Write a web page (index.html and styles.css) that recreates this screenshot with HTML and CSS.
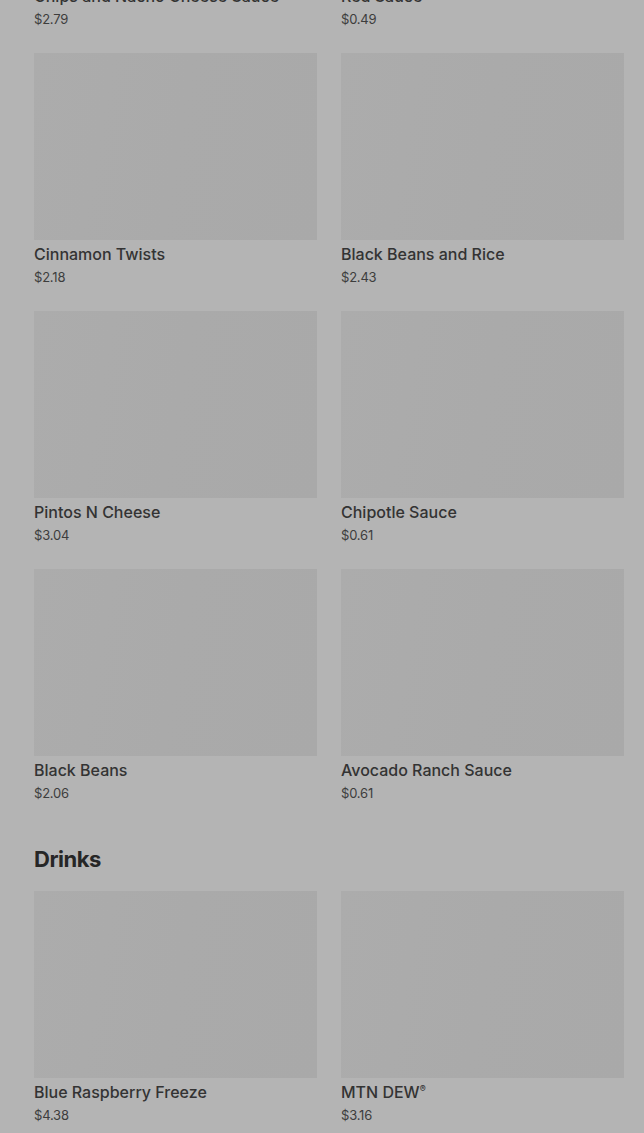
FILE: index.html
```html
<!DOCTYPE html>
<html lang="en">
<head>
    <meta charset="UTF-8">
    <meta name="viewport" content="width=device-width, initial-scale=1.0">
    <title>Menu</title>
    <link rel="stylesheet" href="styles.css">
</head>
<body>
    <div class="menu">
        <section class="categoria">
            <div class="grade">
                <div class="item">
                    <div class="foto"></div>
                    <p class="nome">Chips and Nacho Cheese Sauce</p>
                    <p class="preco">$2.79</p>
                </div>
                <div class="item">
                    <div class="foto"></div>
                    <p class="nome">Red Sauce</p>
                    <p class="preco">$0.49</p>
                </div>
                <div class="item">
                    <div class="foto"></div>
                    <p class="nome">Cinnamon Twists</p>
                    <p class="preco">$2.18</p>
                </div>
                <div class="item">
                    <div class="foto"></div>
                    <p class="nome">Black Beans and Rice</p>
                    <p class="preco">$2.43</p>
                </div>
                <div class="item">
                    <div class="foto"></div>
                    <p class="nome">Pintos N Cheese</p>
                    <p class="preco">$3.04</p>
                </div>
                <div class="item">
                    <div class="foto"></div>
                    <p class="nome">Chipotle Sauce</p>
                    <p class="preco">$0.61</p>
                </div>
                <div class="item">
                    <div class="foto"></div>
                    <p class="nome">Black Beans</p>
                    <p class="preco">$2.06</p>
                </div>
                <div class="item">
                    <div class="foto"></div>
                    <p class="nome">Avocado Ranch Sauce</p>
                    <p class="preco">$0.61</p>
                </div>
            </div>
        </section>

        <section class="categoria">
            <h2 class="titulo">Drinks</h2>
            <div class="grade">
                <div class="item">
                    <div class="foto"></div>
                    <p class="nome">Blue Raspberry Freeze</p>
                    <p class="preco">$4.38</p>
                </div>
                <div class="item">
                    <div class="foto"></div>
                    <p class="nome">MTN DEW<sup>®</sup></p>
                    <p class="preco">$3.16</p>
                </div>
            </div>
        </section>
    </div>
</body>
</html>
```

FILE: styles.css
```css
body {
    margin: 0;
    background-color: #b4b4b4;
    font-family: Inter, "Noto Sans", sans-serif;
    color: #333;
    overflow: hidden;
}
.menu {
    margin-top: -205px;
    padding: 0 20px 0 34px;
}
.titulo {
    margin: 41px 0 18px;
    font-size: 22px;
    line-height: 28px;
    font-weight: 700;
    letter-spacing: -0.5px;
    color: #262626;
}
.grade {
    display: grid;
    grid-template-columns: repeat(2, 1fr);
    column-gap: 24px;
    row-gap: 23px;
}
.foto {
    height: 187px;
    background: linear-gradient(100deg, #acacac 0%, #aaaaaa 50%, #a9a9a9 100%);
}
.nome {
    margin: 4px 0 0;
    font-size: 16px;
    line-height: 20px;
    font-weight: 500;
    color: #333;
}
.nome sup {
    font-size: 9px;
    line-height: 0;
}
.preco {
    margin: 2px 0 0;
    font-size: 13px;
    line-height: 22px;
    color: #3d3d3d;
    letter-spacing: -0.2px;
}
```
